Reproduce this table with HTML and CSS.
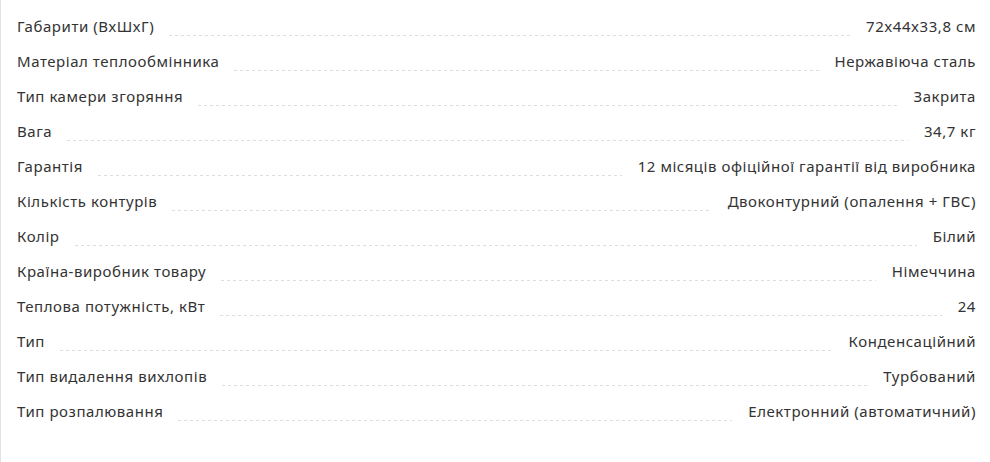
FILE: index.html
```html
<!DOCTYPE html>
<html lang="uk">
<head>
  <meta charset="UTF-8">
  <title>Характеристики</title>
  <meta name="viewport" content="width=device-width, initial-scale=1">
  <link rel="stylesheet" href="styles.css">
</head>
<body>
  <div class="specs">
    <div class="spec-row"><span class="spec-name">Габарити (ВхШхГ)</span><span class="spec-dots"></span><span class="spec-value">72x44x33,8 см</span></div>
    <div class="spec-row"><span class="spec-name">Матеріал теплообмінника</span><span class="spec-dots"></span><span class="spec-value">Нержавіюча сталь</span></div>
    <div class="spec-row"><span class="spec-name">Тип камери згоряння</span><span class="spec-dots"></span><span class="spec-value">Закрита</span></div>
    <div class="spec-row"><span class="spec-name">Вага</span><span class="spec-dots"></span><span class="spec-value">34,7 кг</span></div>
    <div class="spec-row"><span class="spec-name">Гарантія</span><span class="spec-dots"></span><span class="spec-value">12 місяців офіційної гарантії від виробника</span></div>
    <div class="spec-row"><span class="spec-name">Кількість контурів</span><span class="spec-dots"></span><span class="spec-value">Двоконтурний (опалення + ГВС)</span></div>
    <div class="spec-row"><span class="spec-name">Колір</span><span class="spec-dots"></span><span class="spec-value">Білий</span></div>
    <div class="spec-row"><span class="spec-name">Країна-виробник товару</span><span class="spec-dots"></span><span class="spec-value">Німеччина</span></div>
    <div class="spec-row"><span class="spec-name">Теплова потужність, кВт</span><span class="spec-dots"></span><span class="spec-value">24</span></div>
    <div class="spec-row"><span class="spec-name">Тип</span><span class="spec-dots"></span><span class="spec-value">Конденсаційний</span></div>
    <div class="spec-row"><span class="spec-name">Тип видалення вихлопів</span><span class="spec-dots"></span><span class="spec-value">Турбований</span></div>
    <div class="spec-row"><span class="spec-name">Тип розпалювання</span><span class="spec-dots"></span><span class="spec-value">Електронний (автоматичний)</span></div>
  </div>
</body>
</html>
```

FILE: styles.css
```css
body {
  margin: 0;
  padding: 0;
  background: #fff;
  font-family: 'Noto Sans', 'Open Sans', sans-serif;
  color: #333;
}
.specs {
  border-left: 1px solid #e3e3e3;
  min-height: 462px;
  box-sizing: border-box;
  padding: 8px 14px 0 16px;
}
.spec-row {
  display: flex;
  align-items: center;
  height: 35px;
  font-size: 15px;
  letter-spacing: 0.55px;
}
.spec-name,
.spec-value {
  white-space: nowrap;
}
.spec-dots {
  flex: 1;
  align-self: flex-end;
  margin: 0 16px 7px 15px;
  height: 1px;
  background: linear-gradient(90deg, #dedede 0 3px, transparent 3px 6px) repeat-x;
  background-size: 6px 1px;
}
```
